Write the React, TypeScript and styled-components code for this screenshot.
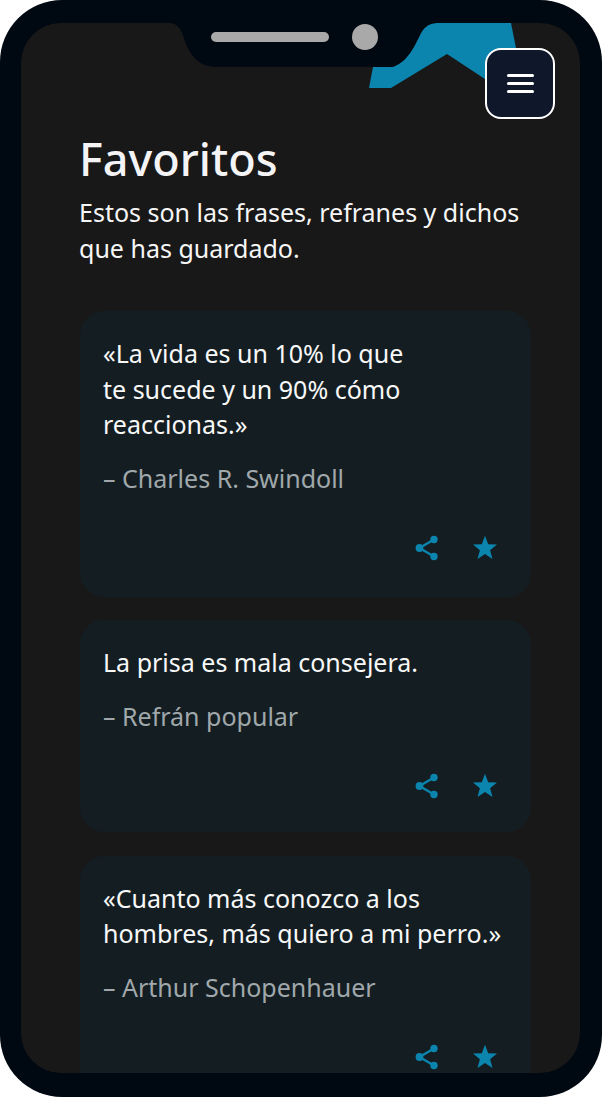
import * as React from "react";
import styled, { createGlobalStyle } from "styled-components";

type Quote = {
  lines: string[];
  author: string;
  height: number;
};

const quotes: Quote[] = [
  {
    lines: ["«La vida es un 10% lo que", "te sucede y un 90% cómo", "reaccionas.»"],
    author: "– Charles R. Swindoll",
    height: 285.5,
  },
  {
    lines: ["La prisa es mala consejera."],
    author: "– Refrán popular",
    height: 212,
  },
  {
    lines: ["«Cuanto más conozco a los", "hombres, más quiero a mi perro.»"],
    author: "– Arthur Schopenhauer",
    height: 248,
  },
];

const GlobalStyle = createGlobalStyle`
  html, body {
    margin: 0;
    padding: 0;
    background: #ffffff;
  }
  body {
    font-family: "Noto Sans", "Liberation Sans", sans-serif;
  }
`;

const Phone = styled.div`
  width: 602px;
  height: 1097px;
  box-sizing: border-box;
  padding: 23px 22px 24px 21px;
  background: #000811;
  border-radius: 62px;
  overflow: hidden;
`;

const Screen = styled.main`
  position: relative;
  height: 100%;
  box-sizing: border-box;
  padding: 110px 49px 0 59px;
  background: #181818;
  border-radius: 40px;
  overflow: hidden;
`;

const Decoration = styled.svg`
  position: absolute;
  top: 0;
  left: 0;
`;

const Speaker = styled.div`
  position: absolute;
  top: 9px;
  left: 190px;
  width: 118px;
  height: 10px;
  border-radius: 5px;
  background: #a9a9a9;
`;

const Camera = styled.div`
  position: absolute;
  top: 1px;
  left: 331px;
  width: 26px;
  height: 26px;
  border-radius: 50%;
  background: #a9a9a9;
`;

const MenuButton = styled.button`
  position: absolute;
  top: 25px;
  left: 464px;
  width: 70px;
  height: 71px;
  box-sizing: border-box;
  padding: 0;
  display: flex;
  flex-direction: column;
  align-items: center;
  justify-content: center;
  gap: 5px;
  background: #0f172a;
  border: 2px solid #ffffff;
  border-radius: 16px;
`;

const MenuBar = styled.span`
  display: block;
  width: 27px;
  height: 3px;
  border-radius: 2px;
  background: #ffffff;
`;

const Title = styled.h1`
  margin: 0 0 0 -1px;
  font-size: 45px;
  line-height: 52px;
  font-weight: 500;
  color: #f4f4f6;
`;

const Subtitle = styled.p`
  margin: 9px 0 45px -1px;
  width: 460px;
  font-size: 25px;
  line-height: 36px;
  color: #f6f6f6;
`;

const CardList = styled.div`
  display: flex;
  flex-direction: column;
  gap: 23.5px;
`;

const Card = styled.article<{ $height: number }>`
  flex: none;
  height: ${(p) => p.$height}px;
  box-sizing: border-box;
  padding: 25px 23px 0;
  background: #141e22;
  border-radius: 24px;
  display: flex;
  flex-direction: column;
`;

const QuoteText = styled.p`
  margin: 0;
  font-size: 25px;
  line-height: 35.5px;
  color: #f8f8f8;
`;

const Author = styled.p`
  margin: 17.5px 0 0;
  font-size: 25px;
  line-height: 36px;
  color: #a0a8ab;
`;

const Actions = styled.div`
  margin-top: 39px;
  display: flex;
  justify-content: flex-end;
  align-items: center;
  gap: 32px;
  padding-right: 10px;
`;

const IconButton = styled.span`
  display: block;
  width: 26px;
  height: 26px;
`;

const ShareIcon = () => (
  <svg width="26" height="26" viewBox="0 0 26 26" aria-hidden="true">
    <path d="M20 4.5 5.5 13 20 21.5" fill="none" stroke="#0b84ae" strokeWidth="2.4" />
    <circle cx="20" cy="4.5" r="3.7" fill="#0b84ae" />
    <circle cx="5.5" cy="13" r="3.9" fill="#0b84ae" />
    <circle cx="20" cy="21.5" r="3.7" fill="#0b84ae" />
  </svg>
);

const StarIcon = () => (
  <svg width="26" height="26" viewBox="0 0 26 26" aria-hidden="true">
    <path
      d="M13 .8 16.2 9.3 25 9.6 18.1 15.2 20.5 23.9 13 18.9 5.5 23.9 7.9 15.2 1 9.6 9.8 9.3Z"
      fill="#0b84ae"
    />
  </svg>
);

const App: React.FunctionComponent = () => {
  return (
    <Phone>
      <GlobalStyle />
      <Screen>
        <Decoration width="559" height="100" viewBox="0 0 559 100" aria-hidden="true">
          <path
            d="M348 65 352 44H371C385 40 392 26 398 14 402 5 407 0 416 0H490L496 30 470 60 426 31 370 65Z"
            fill="#0b84ae"
          />
          <path
            d="M148 0C155 0 159 4 162 12 167 30 176 44 196 44H371C385 40 392 26 398 14 402 5 407 0 416 0Z"
            fill="#000811"
          />
        </Decoration>
        <Speaker />
        <Camera />
        <MenuButton aria-label="Menú">
          <MenuBar />
          <MenuBar />
          <MenuBar />
        </MenuButton>
        <Title>Favoritos</Title>
        <Subtitle>
          Estos son las frases, refranes y dichos que has guardado.
        </Subtitle>
        <CardList>
          {quotes.map((quote) => (
            <Card key={quote.author} $height={quote.height}>
              <QuoteText>
                {quote.lines.map((line) => (
                  <React.Fragment key={line}>
                    {line}
                    <br />
                  </React.Fragment>
                ))}
              </QuoteText>
              <Author>{quote.author}</Author>
              <Actions>
                <IconButton>
                  <ShareIcon />
                </IconButton>
                <IconButton>
                  <StarIcon />
                </IconButton>
              </Actions>
            </Card>
          ))}
        </CardList>
      </Screen>
    </Phone>
  );
};

export default App;
